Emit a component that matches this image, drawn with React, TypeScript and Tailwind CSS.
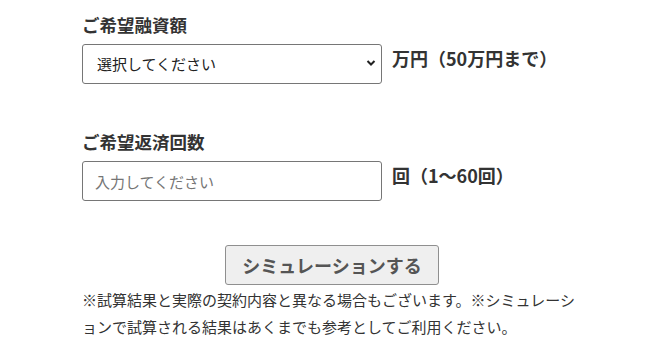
import React from "react";

export default function App() {
  const font = { fontFamily: '"Noto Sans CJK JP", "Noto Sans", sans-serif' };
  return (
    <div className="w-[654px] h-[357px] bg-white text-[#333]" style={font}>
      <div className="pl-[82px] w-[582px] pt-[12px]">
        <div className="text-[17.5px] font-bold leading-[26px] mb-[6px]">ご希望融資額</div>
        <div className="flex items-start gap-[10px]">
          <div className="relative w-[300px] h-[40px]">
            <select
              className="appearance-none w-full h-full border border-[#767676] rounded-[3px] bg-white pl-[14px] pr-8 text-[15px] text-[#222] outline-none"
              style={font}
              defaultValue=""
            >
              <option value="">選択してください</option>
            </select>
            <svg className="absolute right-[6px] top-[15px] pointer-events-none" width="10" height="8" viewBox="0 0 10 8">
              <path d="M1.5 2 L5 5.5 L8.5 2" fill="none" stroke="#222" strokeWidth="2" />
            </svg>
          </div>
          <div className="text-[18px] font-bold leading-[26px] pt-[1px]">万円（50万円まで）</div>
        </div>

        <div className="text-[17.5px] font-bold leading-[26px] mt-[45px] mb-[6px]">ご希望返済回数</div>
        <div className="flex items-start gap-[10px]">
          <input
            className="w-[300px] h-[40px] border border-[#767676] rounded-[3px] bg-white px-[12px] text-[15px] outline-none placeholder:text-[#757575]"
            style={font}
            placeholder="入力してください"
          />
          <div className="text-[18px] font-bold leading-[26px] pt-[1px]">回（1〜60回）</div>
        </div>

        <div className="w-[500px] flex justify-center mt-[44px]">
          <button
            className="w-[214px] h-[40px] bg-[#efefef] border border-[#8f8f8f] rounded-[3px] text-[18px] font-bold text-[#555]"
            style={font}
          >
            シミュレーションする
          </button>
        </div>
        <p className="w-[500px] text-[15px] leading-[27px] text-[#333] mt-[1px]">
          ※試算結果と実際の契約内容と異なる場合もございます。※シミュレーションで試算される結果はあくまでも参考としてご利用ください。
        </p>
      </div>
    </div>
  );
}
